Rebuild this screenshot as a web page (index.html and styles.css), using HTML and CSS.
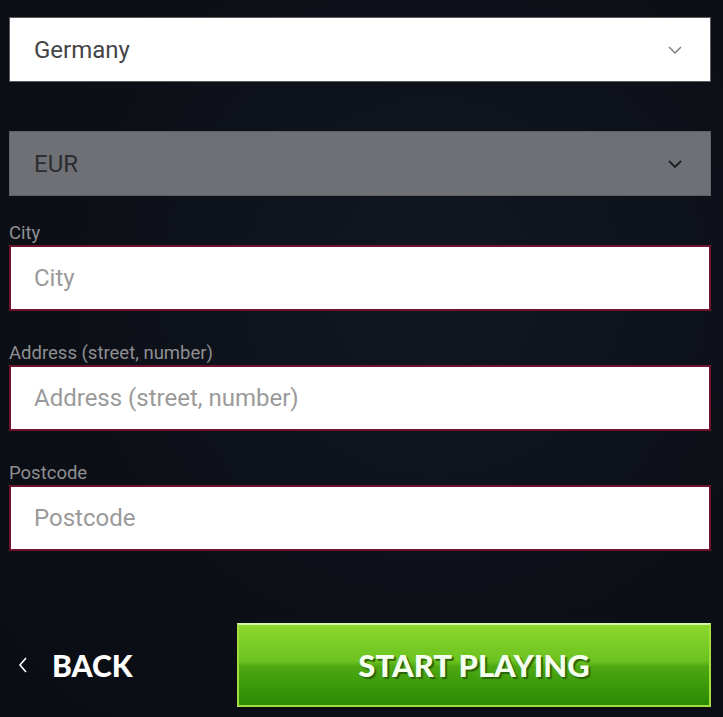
FILE: index.html
```html
<!DOCTYPE html>
<html>
<head>
<meta charset="utf-8">
<link rel="stylesheet" href="styles.css">
</head>
<body>
<div class="page">
  <div class="select select-light">
    <span class="value">Germany</span>
    <svg class="chev" width="14" height="8" viewBox="0 0 14 8"><path d="M1 1 L7 7 L13 1" fill="none" stroke="#808080" stroke-width="1.5"/></svg>
  </div>
  <div class="select select-disabled">
    <span class="value">EUR</span>
    <svg class="chev" width="14" height="8" viewBox="0 0 14 8"><path d="M1 1 L7 7 L13 1" fill="none" stroke="#1e1f22" stroke-width="1.8"/></svg>
  </div>
  <div class="field field-first">
    <label class="label">City</label>
    <div class="input"><span class="placeholder">City</span></div>
  </div>
  <div class="field">
    <label class="label">Address (street, number)</label>
    <div class="input"><span class="placeholder">Address (street, number)</span></div>
  </div>
  <div class="field">
    <label class="label">Postcode</label>
    <div class="input"><span class="placeholder">Postcode</span></div>
  </div>
  <div class="actions">
    <div class="back">
      <svg class="back-chev" width="10" height="16" viewBox="0 0 10 16"><path d="M8 1 L2 8 L8 15" fill="none" stroke="#ffffff" stroke-width="1.6"/></svg>
      <span>BACK</span>
    </div>
    <div class="start"><span>START PLAYING</span></div>
  </div>
</div>
</body>
</html>
```

FILE: styles.css
```css
html, body {
  margin: 0;
  padding: 0;
  background: #0c0f16;
}
body {
  font-family: Roboto, "Noto Sans", sans-serif;
  width: 723px;
  height: 717px;
  overflow: hidden;
  background: radial-gradient(ellipse at 60% 40%, #111722 0%, #0c0f16 60%, #0a0d13 100%);
}
.page {
  padding: 17px 12px 0 9px;
}
.select {
  height: 65px;
  box-sizing: border-box;
  display: flex;
  align-items: center;
  justify-content: space-between;
  padding: 0 28px 0 24px;
  font-size: 24px;
}
.select-light {
  background: #ffffff;
  border: 1px solid #5a5c60;
  color: #444446;
}
.select-disabled {
  margin-top: 49px;
  background: #6e7075;
  border: 1px solid #5e6065;
  color: #2c2d30;
}
.value {
  line-height: 1;
}
.chev {
  display: block;
}
.field {
  margin-top: 32px;
  display: flex;
  flex-direction: column;
}
.field-first {
  margin-top: 27px;
}
.label {
  font-size: 18.5px;
  line-height: 20px;
  color: #8f8f93;
  margin-bottom: 2px;
}
.input {
  height: 66px;
  box-sizing: border-box;
  background: #ffffff;
  border: 2px solid #6e1230;
  display: flex;
  align-items: center;
  padding-left: 23px;
}
.placeholder {
  font-size: 24px;
  color: #9a9a9a;
}
.actions {
  margin-top: 72px;
  display: flex;
  align-items: center;
}
.back {
  width: 228px;
  display: flex;
  align-items: center;
  padding-left: 9px;
  box-sizing: border-box;
  gap: 24px;
  color: #ffffff;
  font-family: Lato, "Open Sans", sans-serif;
  font-weight: 900;
  font-size: 30px;
}
.back-chev {
  display: block;
}
.start {
  width: 474px;
  height: 84px;
  box-sizing: border-box;
  border: 2px solid #a4dd3c;
  border-top-color: #d8f7a6;
  background: linear-gradient(to bottom, #8bd82e 0%, #6cc21f 45%, #4ea812 52%, #3b9a09 75%, #2c8a03 100%);
  display: flex;
  align-items: center;
  justify-content: center;
  color: #f6ffee;
  font-family: Lato, "Open Sans", sans-serif;
  font-weight: 900;
  font-size: 31px;
  text-shadow: 2px 2px 1px #2a6408;
}
```
